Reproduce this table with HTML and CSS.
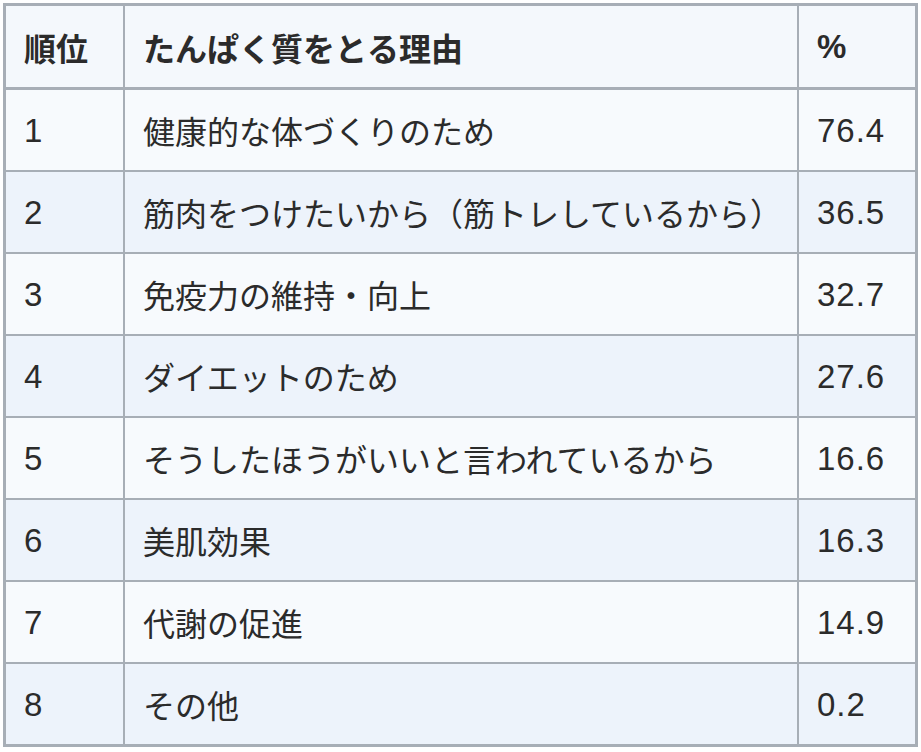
FILE: index.html
```html
<!DOCTYPE html>
<html lang="ja">
<head>
<meta charset="utf-8">
<link rel="stylesheet" href="styles.css">
</head>
<body>
<table class="rank-table">
  <colgroup>
    <col class="c-rank">
    <col class="c-reason">
    <col class="c-pct">
  </colgroup>
  <thead>
    <tr><th>順位</th><th>たんぱく質をとる理由</th><th class="num">%</th></tr>
  </thead>
  <tbody>
    <tr><td class="num">1</td><td>健康的な体づくりのため</td><td class="num">76.4</td></tr>
    <tr><td class="num">2</td><td>筋肉をつけたいから（筋トレしているから）</td><td class="num">36.5</td></tr>
    <tr><td class="num">3</td><td>免疫力の維持・向上</td><td class="num">32.7</td></tr>
    <tr><td class="num">4</td><td>ダイエットのため</td><td class="num">27.6</td></tr>
    <tr><td class="num">5</td><td>そうしたほうがいいと言われているから</td><td class="num">16.6</td></tr>
    <tr><td class="num">6</td><td>美肌効果</td><td class="num">16.3</td></tr>
    <tr><td class="num">7</td><td>代謝の促進</td><td class="num">14.9</td></tr>
    <tr><td class="num">8</td><td>その他</td><td class="num">0.2</td></tr>
  </tbody>
</table>
</body>
</html>
```
FILE: styles.css
```css
html, body {
  margin: 0;
  padding: 0;
  background: #ffffff;
}
body {
  padding: 3px;
  font-family: "Noto Sans CJK JP", "Noto Sans", sans-serif;
  color: #2b2b2b;
}
.rank-table {
  width: 915px;
  table-layout: fixed;
  border-collapse: separate;
  border-spacing: 0;
  border: 3px solid #a7aeb6;
}
.c-rank { width: 119px; }
.c-reason { width: 674px; }
.c-pct { width: 116px; }
.rank-table th,
.rank-table td {
  box-sizing: border-box;
  padding: 0 0 0 18px;
  text-align: left;
  vertical-align: middle;
  border-right: 2px solid #a7aeb6;
  border-bottom: 2px solid #a7aeb6;
  font-size: 32px;
  line-height: 1;
  white-space: nowrap;
}
.rank-table th:last-child,
.rank-table td:last-child {
  border-right: none;
}
.rank-table tbody tr:last-child td {
  border-bottom: none;
}
.rank-table th {
  height: 84px;
  border-bottom-width: 3px;
  background: #f4f8fc;
  font-weight: 700;
}
.rank-table td {
  height: 82px;
  font-weight: 400;
}
.rank-table tbody tr:last-child td {
  height: 80px;
}
.rank-table tbody tr:nth-child(odd) td {
  background: #f7fafd;
}
.rank-table tbody tr:nth-child(even) td {
  background: #edf3fb;
}
.rank-table .num {
  font-family: "Liberation Sans", Arial, sans-serif;
  font-size: 33px;
  letter-spacing: 1px;
}
.rank-table th.num {
  font-weight: 700;
}
```
